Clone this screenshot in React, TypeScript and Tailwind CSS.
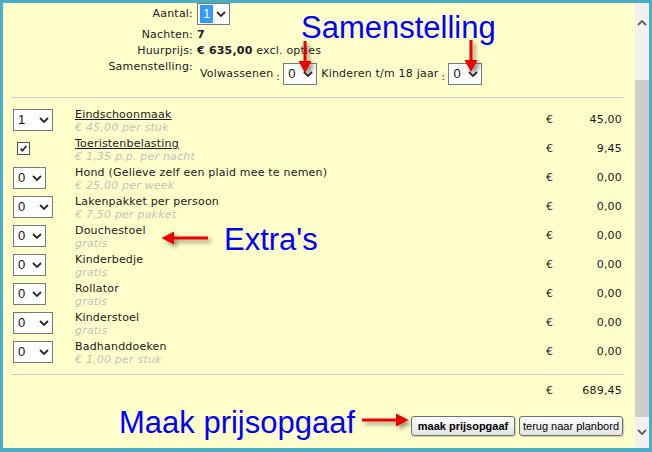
import React from "react"

const verdana = { fontFamily: '"DejaVu Sans", Verdana, sans-serif' }

function Chevron({ className = "" }: { className?: string }) {
  return (
    <svg viewBox="0 0 10 6" className={className} fill="none">
      <path d="M1 1l4 4 4-4" stroke="currentColor" strokeWidth="1.8" />
    </svg>
  )
}

function Select({ value, width, highlight = false }: { value: string; width: string; highlight?: boolean }) {
  return (
    <div
      className={`${width} h-[22px] flex items-center justify-between border border-[#7a7a7a] bg-white pl-[2px] pr-[3px] text-[13px] tracking-normal text-[#111] font-['Liberation_Sans',Arial,sans-serif]`}
    >
      <span className={highlight ? "bg-[#3399ff] text-white px-[3px] leading-[18px]" : "px-[2px] leading-[18px]"}>{value}</span>
      <Chevron className="w-[10px] h-[6px] text-[#2a2a2a]" />
    </div>
  )
}

function Checkbox() {
  return (
    <div className="ml-[4px] w-[13px] h-[13px] border border-[#555] bg-white flex items-center justify-center">
      <svg viewBox="0 0 9 9" className="w-[9px] h-[9px]" fill="none">
        <path d="M1.5 4.5l2 2.2 4-5" stroke="#222" strokeWidth="1.6" />
      </svg>
    </div>
  )
}

const items = [
  { ctl: "1", w: "w-[40px]", name: "Eindschoonmaak", link: true, sub: "€ 45,00 per stuk", amount: "45,00" },
  { ctl: "check", w: "", name: "Toeristenbelasting", link: true, sub: "€ 1,35 p.p. per nacht", amount: "9,45" },
  { ctl: "0", w: "w-[33px]", name: "Hond (Gelieve zelf een plaid mee te nemen)", sub: "€ 25,00 per week", amount: "0,00" },
  { ctl: "0", w: "w-[40px]", name: "Lakenpakket per persoon", sub: "€ 7,50 per pakket", amount: "0,00" },
  { ctl: "0", w: "w-[33px]", name: "Douchestoel", sub: "gratis", amount: "0,00" },
  { ctl: "0", w: "w-[33px]", name: "Kinderbedje", sub: "gratis", amount: "0,00" },
  { ctl: "0", w: "w-[33px]", name: "Rollator", sub: "gratis", amount: "0,00" },
  { ctl: "0", w: "w-[40px]", name: "Kinderstoel", sub: "gratis", amount: "0,00" },
  { ctl: "0", w: "w-[40px]", name: "Badhanddoeken", sub: "€ 1,00 per stuk", amount: "0,00" },
]

function DownArrow({ className }: { className: string }) {
  return (
    <svg viewBox="0 0 14 34" className={`absolute w-[14px] h-[34px] drop-shadow-[3px_3px_2px_rgba(60,60,40,0.55)] ${className}`}>
      <rect x="5.5" y="1" width="3" height="22" fill="#ee0000" />
      <polygon points="0.5,21 13.5,21 7,33" fill="#ee0000" />
    </svg>
  )
}

function SideArrow({ className, left = false }: { className: string; left?: boolean }) {
  return (
    <svg viewBox="0 0 48 14" className={`absolute w-[48px] h-[14px] drop-shadow-[3px_3px_2px_rgba(60,60,40,0.55)] ${className}`}>
      {left ? (
        <>
          <rect x="11" y="5.5" width="36" height="3" fill="#ee0000" />
          <polygon points="0.5,7 13,0.5 13,13.5" fill="#ee0000" />
        </>
      ) : (
        <>
          <rect x="1" y="5.5" width="36" height="3" fill="#ee0000" />
          <polygon points="47.5,7 35,0.5 35,13.5" fill="#ee0000" />
        </>
      )}
    </svg>
  )
}

export default function App() {
  return (
    <div className="w-[652px] h-[452px] flex overflow-hidden border-[#4bacc6] border-t-[3px] border-l-[3px] border-r-[3px] border-b-[4px]">
      <div className="relative flex-1 bg-[#ffffcc] text-[11px] tracking-[0.2px] text-[#1a1a1a] pl-[8px] pr-[12px]" style={verdana}>
        {/* header */}
        <div className="grid grid-cols-[190px_1fr] gap-x-[4px] -ml-[8px]">
          <div className="h-[22px] flex items-center justify-end">Aantal:</div>
          <div className="h-[22px]">
            <Select value="1" width="w-[33px]" highlight />
          </div>
          <div className="mt-[2px] leading-[16px] text-right">Nachten:</div>
          <div className="mt-[2px] leading-[16px] font-bold">7</div>
          <div className="leading-[16px] text-right">Huurprijs:</div>
          <div className="leading-[16px]">
            <span className="font-bold">€ 635,00</span> excl. opties
          </div>
          <div className="leading-[16px] text-right">Samenstelling:</div>
          <div className="mt-[4px] pl-[3px] flex items-center">
            <span>Volwassenen</span>
            <span className="ml-[3px] mr-[3px] translate-y-[3px]">:</span>
            <Select value="0" width="w-[34px]" />
            <span className="ml-[4px]">Kinderen t/m 18 jaar</span>
            <span className="ml-[3px] mr-[3px] translate-y-[3px]">:</span>
            <Select value="0" width="w-[34px]" />
          </div>
        </div>

        <div className="mt-[12px] h-px bg-[#c9c9c9]" />

        {/* extras */}
        <div className="mt-[7px] pl-[2px] pr-[1px]">
          {items.map((it) => (
            <div key={it.name} className="h-[29px] flex">
              <div className="w-[62px] flex items-center">
                {it.ctl === "check" ? <Checkbox /> : <Select value={it.ctl} width={it.w} />}
              </div>
              <div className="flex-1 pt-[3px] leading-[13px]">
                <div className={it.link ? "underline" : ""}>{it.name}</div>
                <div className="italic text-[#c2c2b8]">{it.sub}</div>
              </div>
              <div className="w-[76px] flex items-center justify-between pt-[2px]">
                <span>€</span>
                <span>{it.amount}</span>
              </div>
            </div>
          ))}
        </div>

        <div className="mt-[8px] h-px bg-[#c9c9c9]" />

        <div className="mt-[8px] pr-[1px] flex justify-end leading-[16px]">
          <div className="w-[76px] flex justify-between">
            <span>€</span>
            <span>689,45</span>
          </div>
        </div>

        <div className="mt-[17px] flex justify-end gap-[4px] font-['Liberation_Sans',Arial,sans-serif] text-[11px] tracking-normal text-black">
          <button className="w-[104px] h-[20px] rounded-[3px] border border-[#707070] bg-gradient-to-b from-white to-[#e3e3e3] font-bold shadow-[1px_1px_1px_rgba(0,0,0,0.2)]">
            maak prijsopgaaf
          </button>
          <button className="w-[104px] h-[20px] rounded-[3px] border border-[#707070] bg-gradient-to-b from-white to-[#e3e3e3] shadow-[1px_1px_1px_rgba(0,0,0,0.2)]">
            terug naar planbord
          </button>
        </div>

        {/* annotations */}
        <div className="absolute left-[298px] top-[9px] text-[31px] leading-[31px] tracking-normal text-[#0000ff] font-['Liberation_Sans',Arial,sans-serif]">
          Samenstelling
        </div>
        <div className="absolute left-[221px] top-[221px] text-[31px] leading-[31px] tracking-normal text-[#0000ff] font-['Liberation_Sans',Arial,sans-serif]">
          Extra's
        </div>
        <div className="absolute left-[116px] top-[404px] text-[31px] leading-[31px] tracking-normal text-[#0000ff] font-['Liberation_Sans',Arial,sans-serif]">
          Maak prijsopgaaf
        </div>
        <DownArrow className="left-[295px] top-[37px]" />
        <DownArrow className="left-[461px] top-[36px]" />
        <SideArrow left className="left-[158px] top-[228px]" />
        <SideArrow className="left-[358px] top-[410px]" />
      </div>

      {/* scrollbar */}
      <div className="w-[14px] flex flex-col bg-[#f0f0f0]">
        <div className="h-[77px] flex justify-center pt-[17px]">
          <Chevron className="w-[10px] h-[6px] text-[#606060] rotate-180" />
        </div>
        <div className="h-[337px] bg-[#cdcdcd]" />
        <div className="flex-1 flex justify-center pt-[12px]">
          <Chevron className="w-[10px] h-[6px] text-[#606060]" />
        </div>
      </div>
    </div>
  )
}
